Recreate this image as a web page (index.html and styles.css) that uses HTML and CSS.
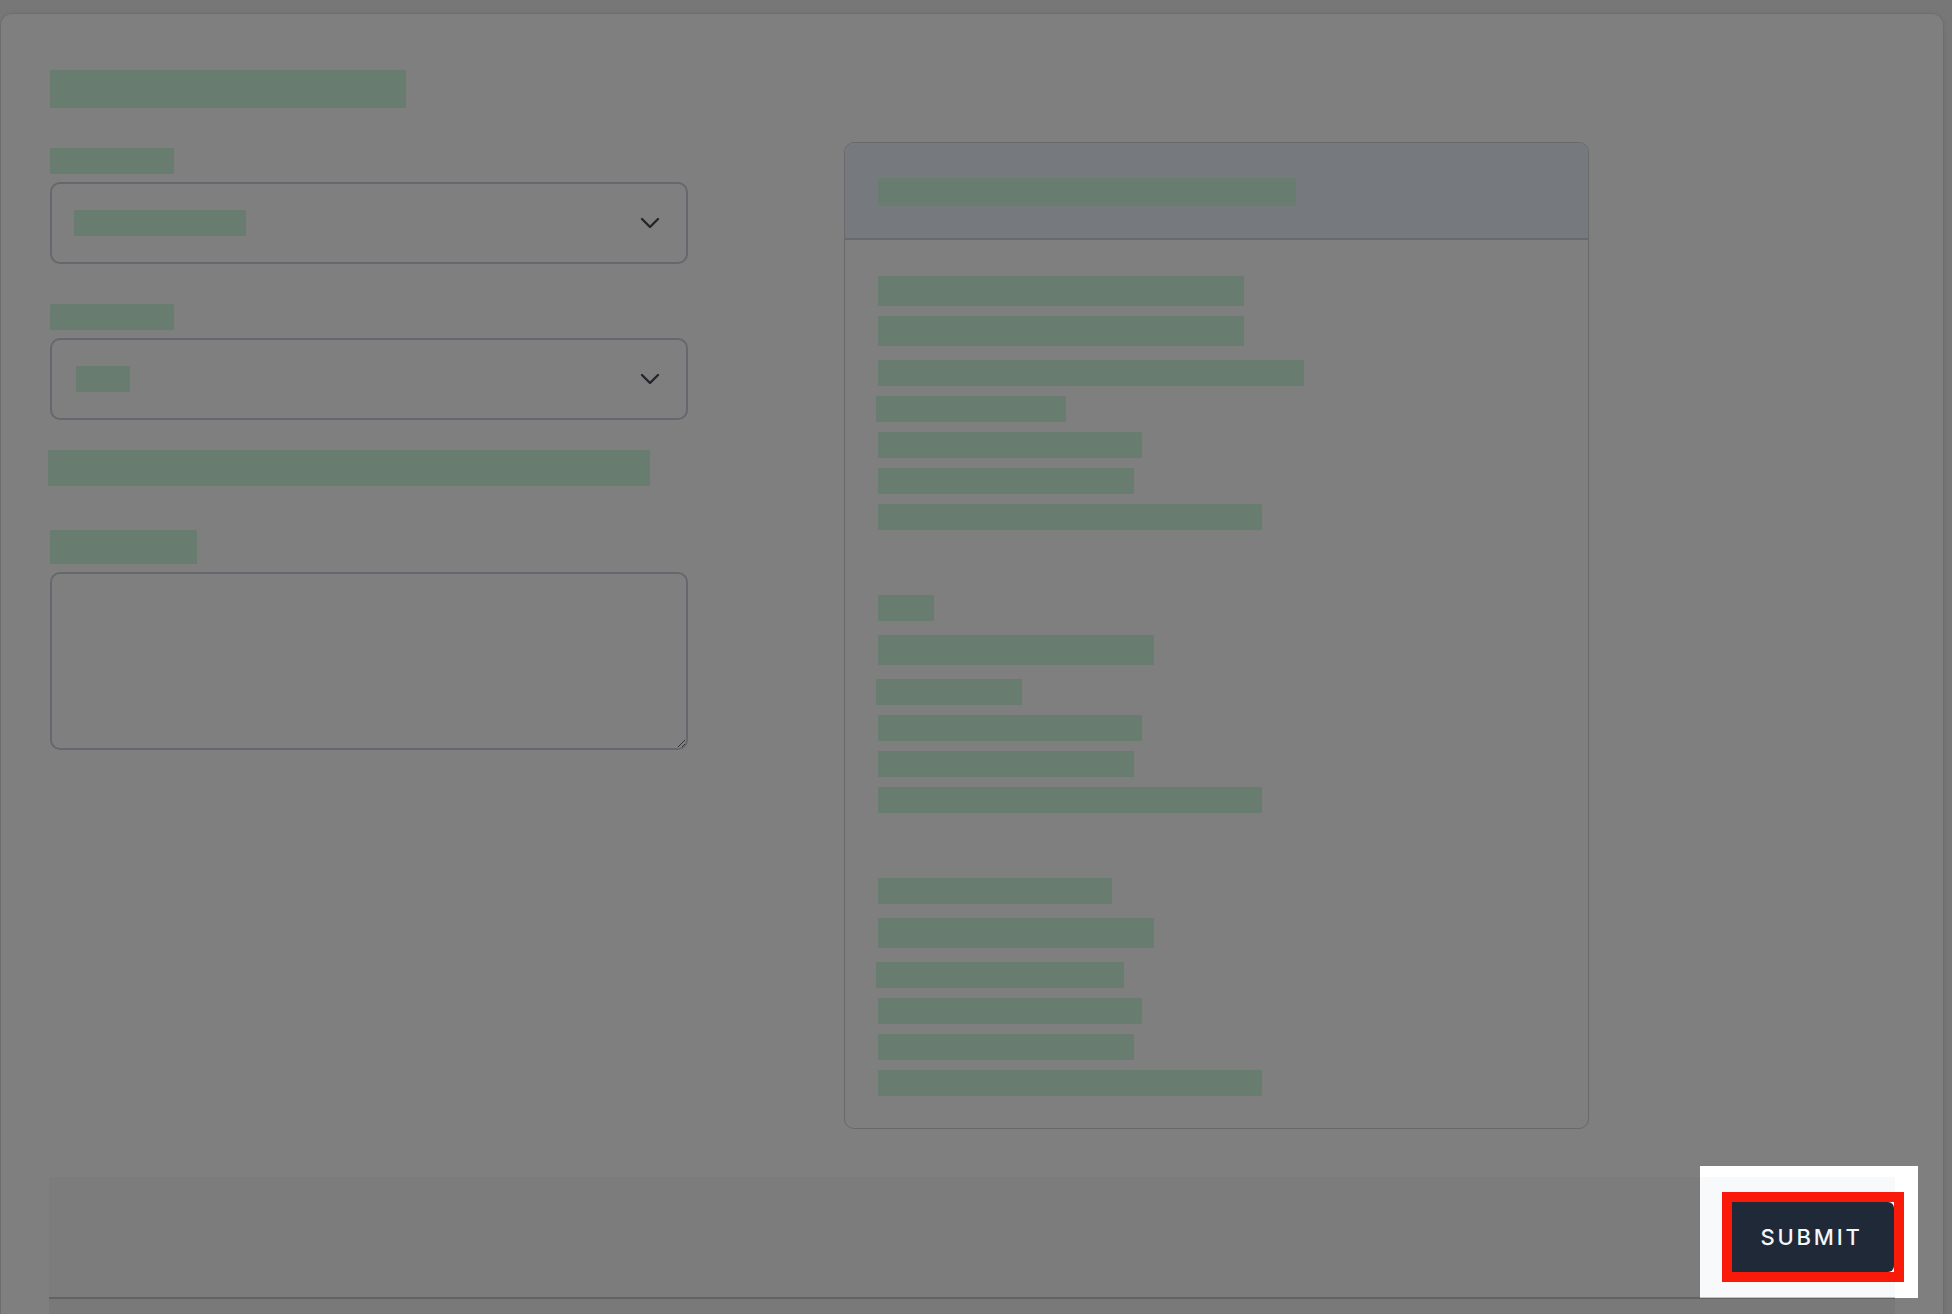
FILE: index.html
```html
<!DOCTYPE html>
<html lang="en">
<head>
    <meta charset="UTF-8">
    <meta name="viewport" content="width=device-width, initial-scale=1.0">
    <title>Request Form</title>
    <link rel="stylesheet" href="styles.css">
</head>
<body>
    <div class="card">
        <div class="form-row">
            <section class="form-col">
                <div class="redact form-title"></div>

                <div class="redact field-label"></div>
                <div class="select">
                    <span class="redact select-value w-172"></span>
                    <svg class="chevron" width="20" height="12" viewBox="0 0 20 12"><path d="M2 2 L10 10 L18 2"/></svg>
                </div>

                <div class="redact field-label"></div>
                <div class="select select-last">
                    <span class="redact select-value w-54 nudge-r"></span>
                    <svg class="chevron" width="20" height="12" viewBox="0 0 20 12"><path d="M2 2 L10 10 L18 2"/></svg>
                </div>

                <div class="redact hint"></div>

                <div class="redact field-label tall"></div>
                <textarea class="notes"></textarea>
            </section>

            <aside class="summary">
                <div class="summary-head">
                    <div class="redact head-title"></div>
                </div>
                <div class="summary-body">
                    <div class="group">
                        <div class="redact ln-lg tight w-366"></div>
                        <div class="redact ln-lg w-366"></div>
                        <div class="redact ln w-426"></div>
                        <div class="redact ln w-190 nudge"></div>
                        <div class="redact ln w-264"></div>
                        <div class="redact ln w-256"></div>
                        <div class="redact ln w-384"></div>
                    </div>
                    <div class="group">
                        <div class="redact ln-head w-56"></div>
                        <div class="redact ln-lg w-276"></div>
                        <div class="redact ln w-146 nudge"></div>
                        <div class="redact ln w-264"></div>
                        <div class="redact ln w-256"></div>
                        <div class="redact ln w-384"></div>
                    </div>
                    <div class="group">
                        <div class="redact ln-head w-234"></div>
                        <div class="redact ln-lg w-276"></div>
                        <div class="redact ln w-248 nudge"></div>
                        <div class="redact ln w-264"></div>
                        <div class="redact ln w-256"></div>
                        <div class="redact ln w-384"></div>
                    </div>
                </div>
            </aside>
        </div>

        <footer class="actions">
            <button class="btn-submit" type="button">SUBMIT</button>
        </footer>
        <div class="below"></div>
    </div>

    <!-- onboarding tour: dim everything except the submit button -->
    <div class="tour-spot"></div>
    <div class="tour-ring"></div>
</body>
</html>
```

FILE: styles.css
```css
html, body {
    margin: 0;
    padding: 0;
    height: 100%;
    overflow: hidden;
}
body {
    background-color: #eeeeee;
    font-family: Inter, "Noto Sans", sans-serif;
    color: #1f2937;
    padding-top: 13px;
    box-sizing: border-box;
}
.card {
    width: 1944px;
    min-height: 1400px;
    box-sizing: border-box;
    background-color: #ffffff;
    border: 1px solid #dcdcdc;
    border-radius: 12px 12px 0 0;
    box-shadow: 0 1px 4px rgba(0, 0, 0, 0.08);
    padding: 48px 48px 0;
}
.redact {
    background-color: #d0f8e0;
    border-radius: 1px;
}
.form-row {
    display: flex;
    align-items: flex-start;
    gap: 156px;
}
.form-col {
    width: 638px;
    padding: 8px 0 0 1px;
}
.form-title {
    width: 356px;
    height: 38px;
    margin-bottom: 40px;
}
.field-label {
    width: 124px;
    height: 26px;
    margin-bottom: 8px;
}
.field-label.tall {
    width: 147px;
    height: 34px;
}
.select {
    display: flex;
    align-items: center;
    justify-content: space-between;
    height: 82px;
    box-sizing: border-box;
    border: 2px solid #cdcfd8;
    border-radius: 10px;
    padding: 0 26px 0 22px;
    margin-bottom: 40px;
}
.select-last {
    margin-bottom: 30px;
}
.select-value {
    height: 26px;
}
.nudge-r {
    margin-left: 2px;
}
.chevron {
    fill: none;
    stroke: #474b58;
    stroke-width: 2.4;
    stroke-linecap: round;
    stroke-linejoin: round;
}
.hint {
    width: 602px;
    height: 36px;
    margin: 0 0 44px -2px;
}
.notes {
    display: block;
    width: 638px;
    height: 178px;
    box-sizing: border-box;
    border: 2px solid #cdcfd8;
    border-radius: 10px;
    padding: 12px 16px;
    font: inherit;
    margin: 0;
}

/* right hand summary panel */
.summary {
    width: 745px;
    box-sizing: border-box;
    margin-top: 80px;
    border: 1px solid #d2d2d2;
    border-radius: 10px;
    overflow: hidden;
}
.summary-head {
    height: 97px;
    box-sizing: border-box;
    background-color: #edf2fc;
    border-bottom: 2px solid #d2d4d8;
    padding: 35px 33px 0;
}
.head-title {
    width: 418px;
    height: 28px;
}
.summary-body {
    padding: 36px 33px 22px;
}
/* margins collapse with the last line's 10px */
.group + .group {
    margin-top: 65px;
}
.ln {
    height: 26px;
    margin-bottom: 10px;
}
.ln-lg {
    height: 30px;
    margin-bottom: 14px;
}
.ln-lg.tight {
    margin-bottom: 10px;
}
.ln-head {
    height: 26px;
    margin-bottom: 14px;
}
.nudge {
    margin-left: -2px;
}
.w-54 { width: 54px; }
.w-56 { width: 56px; }
.w-146 { width: 146px; }
.w-172 { width: 172px; }
.w-190 { width: 190px; }
.w-234 { width: 234px; }
.w-248 { width: 248px; }
.w-256 { width: 256px; }
.w-264 { width: 264px; }
.w-276 { width: 276px; }
.w-366 { width: 366px; }
.w-384 { width: 384px; }
.w-426 { width: 426px; }

.actions {
    display: flex;
    justify-content: flex-end;
    align-items: center;
    height: 122px;
    box-sizing: border-box;
    margin-top: 48px;
    padding-right: 1px;
    background-color: #f8f9fb;
    border-bottom: 2px solid #c4c4c4;
}
.btn-submit {
    width: 168px;
    height: 70px;
    border: none;
    border-radius: 6px;
    background-color: #1f2937;
    color: #f5f6f8;
    font-family: Inter, "Noto Sans", sans-serif;
    font-size: 22px;
    font-weight: 500;
    letter-spacing: 2.8px;
    padding: 0 0 0 3px;
    cursor: pointer;
}
.below {
    height: 120px;
    background-color: #f3f3f3;
}

/* tour overlay */
.tour-spot {
    position: fixed;
    left: 1700px;
    top: 1166px;
    width: 218px;
    height: 132px;
    box-shadow: 0 0 0 4000px rgba(0, 0, 0, 0.5);
    pointer-events: none;
}
.tour-ring {
    position: fixed;
    left: 1722px;
    top: 1192px;
    width: 182px;
    height: 90px;
    box-sizing: border-box;
    border: 10px solid #fa1a0a;
    pointer-events: none;
}
```
